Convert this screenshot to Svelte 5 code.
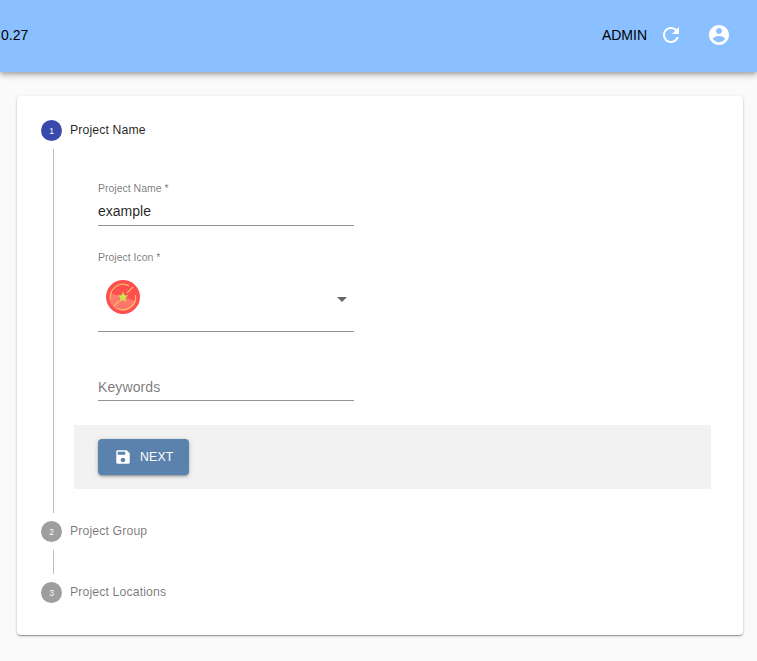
<script>
  let projectName = $state("example");
  let keywords = $state("");

  const laterSteps = [
    { num: 2, label: "Project Group" },
    { num: 3, label: "Project Locations" }
  ];
</script>

<header class="topbar">
  <span class="version">0.27</span>
  <div class="actions">
    <span class="user">ADMIN</span>
    <svg class="refresh" viewBox="0 0 24 24" width="24" height="24">
      <path fill="#fff" d="M17.65 6.35C16.2 4.9 14.21 4 12 4c-4.42 0-7.99 3.58-7.99 8s3.57 8 7.99 8c3.73 0 6.84-2.55 7.73-6h-2.08c-.82 2.33-3.04 4-5.65 4-3.31 0-6-2.69-6-6s2.69-6 6-6c1.66 0 3.14.69 4.22 1.78L13 11h7V4l-2.35 2.35z" />
    </svg>
    <svg class="account" viewBox="0 0 24 24" width="24" height="24">
      <path fill="#fff" d="M12 2C6.48 2 2 6.48 2 12s4.48 10 10 10 10-4.48 10-10S17.52 2 12 2zm0 3c1.66 0 3 1.34 3 3s-1.34 3-3 3-3-1.34-3-3 1.34-3 3-3zm0 14.2c-2.5 0-4.71-1.28-6-3.22.03-1.99 4-3.08 6-3.08 1.99 0 5.97 1.09 6 3.08-1.29 1.94-3.5 3.22-6 3.22z" />
    </svg>
  </div>
</header>

<div class="page">
  <main class="card">
    <div class="step-head">
      <span class="dot active">1</span>
      <span class="step-label active">Project Name</span>
    </div>

    <div class="step-content">
      <form class="fields" onsubmit={(e) => e.preventDefault()}>
        <div class="field name-field">
          <label for="pname">Project Name *</label>
          <input id="pname" type="text" bind:value={projectName} />
        </div>

        <div class="field icon-field">
          <span class="field-label">Project Icon *</span>
          <div class="select">
            <svg class="project-icon" viewBox="0 0 34 34" width="34" height="34">
              <circle cx="17" cy="17" r="17" fill="#fd4f50" />
              <path d="M17 17 L4 13 A13.5 13.5 0 0 0 12 30 Z" fill="#fe7a6e" />
              <path d="M17 17 L12 30 A13.5 13.5 0 0 0 30 21 Z" fill="#fe766b" />
              <path d="M4.5 19 A12.7 12.7 0 0 1 23 5.8" fill="none" stroke="#fdc060" stroke-width="1.1" />
              <path d="M29.5 15 A12.7 12.7 0 0 1 11 28.2" fill="none" stroke="#fdc060" stroke-width="1.1" />
              <path d="M8 26 L13 21 M21 13 L27 7" fill="none" stroke="#fdc060" stroke-width="1.1" />
              <path d="M17 11.8 L18.5 15.2 L22.2 15.6 L19.4 18.1 L20.2 21.8 L17 19.9 L13.8 21.8 L14.6 18.1 L11.8 15.6 L15.5 15.2 Z" fill="#cbe64e" />
            </svg>
            <span class="caret"></span>
          </div>
        </div>

        <div class="field keywords-field">
          <input type="text" placeholder="Keywords" bind:value={keywords} />
        </div>
      </form>

      <div class="button-bar">
        <button class="next" type="button">
          <svg viewBox="0 0 24 24" width="18" height="18">
            <path fill="#fff" d="M17 3H5c-1.11 0-2 .9-2 2v14c0 1.1.89 2 2 2h14c1.1 0 2-.9 2-2V7l-4-4zm-5 16c-1.66 0-3-1.34-3-3s1.34-3 3-3 3 1.34 3 3-1.34 3-3 3zm3-10H5V5h10v4z" />
          </svg>
          NEXT
        </button>
      </div>
    </div>

    {#each laterSteps as step, i (step.num)}
      <div class="step-head later">
        <span class="dot">{step.num}</span>
        <span class="step-label">{step.label}</span>
      </div>
      {#if i < laterSteps.length - 1}
        <div class="connector"></div>
      {/if}
    {/each}
  </main>
</div>

<style>
  :global(body) {
    background: #fafafa;
    font-family: "Liberation Sans", Arial, sans-serif;
  }

  .topbar {
    box-sizing: border-box;
    height: 72px;
    background: #8ac0ff;
    box-shadow: 0 2px 4px -1px rgba(0, 0, 0, 0.2), 0 4px 5px 0 rgba(0, 0, 0, 0.14), 0 1px 10px 0 rgba(0, 0, 0, 0.12);
    display: flex;
    align-items: center;
    justify-content: space-between;
    padding: 0 26px 3px 1px;
    color: #000;
    font-size: 14px;
  }
  .actions {
    display: flex;
    align-items: center;
  }
  .user {
    margin-right: 12px;
  }
  .account {
    margin-left: 24px;
  }

  .page {
    box-sizing: border-box;
    height: 589px;
    padding: 24px 14px 26px 17px;
  }
  .card {
    box-sizing: border-box;
    height: 539px;
    padding: 24px;
    background: #fff;
    border-radius: 4px;
    box-shadow: 0 1px 3px 0 rgba(0, 0, 0, 0.22), 0 1px 1px 0 rgba(0, 0, 0, 0.16), 0 2px 1px -1px rgba(0, 0, 0, 0.14);
  }

  .step-head {
    display: flex;
    align-items: center;
    height: 21px;
  }
  .dot {
    width: 21px;
    height: 21px;
    border-radius: 50%;
    background: #9e9e9e;
    color: #fff;
    font-size: 8.5px;
    display: flex;
    align-items: center;
    justify-content: center;
    margin-right: 8px;
  }
  .dot.active {
    background: #3949ab;
  }
  .step-label {
    font-size: 12.25px;
    letter-spacing: 0.13px;
    color: rgba(0, 0, 0, 0.54);
    margin-top: -2px;
  }
  .step-label.active {
    color: rgba(0, 0, 0, 0.87);
  }

  .step-content {
    margin: 8px 0 8px 12px;
    padding: 0 8px 24px 20px;
    border-left: 1px solid #bdbdbd;
    height: 340px;
    width: 637px;
  }
  .fields {
    padding: 33px 0 0 24px;
    width: 256px;
    height: 243px;
    box-sizing: content-box;
  }
  .field {
    display: flex;
    flex-direction: column;
    border-bottom: 1px solid #949494;
    box-sizing: border-box;
  }
  .name-field {
    height: 44px;
  }
  .icon-field {
    margin-top: 25px;
    height: 81px;
  }
  .keywords-field {
    margin-top: 45px;
    height: 24px;
    justify-content: flex-end;
  }
  label,
  .field-label {
    font-size: 10.5px;
    line-height: 12px;
    color: rgba(0, 0, 0, 0.54);
  }
  input {
    border: 0;
    outline: 0;
    background: none;
    padding: 0;
    font-family: inherit;
    font-size: 14px;
    color: rgba(0, 0, 0, 0.87);
  }
  .name-field input {
    margin-top: 8px;
    line-height: 18px;
    height: 18px;
  }
  .keywords-field input {
    height: 18px;
    margin-bottom: 4px;
    letter-spacing: 0.1px;
  }
  input::placeholder {
    color: rgba(0, 0, 0, 0.54);
    opacity: 1;
  }
  .select {
    display: flex;
    align-items: center;
    justify-content: space-between;
    padding: 17px 7px 0 8px;
  }
  .project-icon {
    display: block;
  }
  .caret {
    width: 0;
    height: 0;
    border-left: 5px solid transparent;
    border-right: 5px solid transparent;
    border-top: 5px solid #666;
    margin-top: 4px;
  }

  .button-bar {
    background: #f2f2f2;
    height: 64px;
    padding: 14px 24px;
    box-sizing: border-box;
  }
  .next {
    display: flex;
    align-items: center;
    gap: 8px;
    width: 91px;
    height: 36px;
    padding: 0 0 0 16px;
    border: 0;
    border-radius: 4px;
    background: #5b82ac;
    color: #fff;
    font-family: inherit;
    font-size: 12.25px;
    letter-spacing: 0.2px;
    box-shadow: 0 1px 5px 0 rgba(0, 0, 0, 0.2), 0 2px 2px 0 rgba(0, 0, 0, 0.14), 0 3px 1px -2px rgba(0, 0, 0, 0.12);
  }

  .connector {
    margin: 8px 0 8px 12px;
    height: 24px;
    border-left: 1px solid #bdbdbd;
  }
</style>
